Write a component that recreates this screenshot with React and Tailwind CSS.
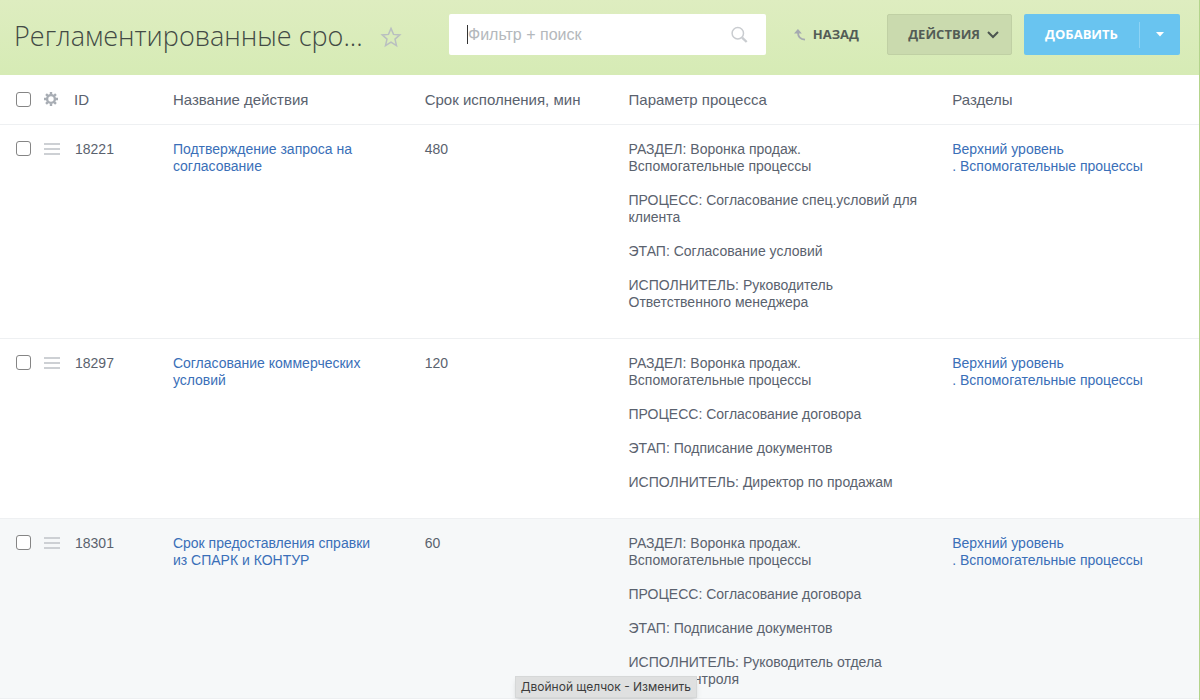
import { useState } from 'react';

const rows = [
  {
    id: 18221,
    name: 'Подтверждение запроса на согласование',
    term: 480,
    params: [
      'РАЗДЕЛ: Воронка продаж. Вспомогательные процессы',
      'ПРОЦЕСС: Согласование спец.условий для клиента',
      'ЭТАП: Согласование условий',
      'ИСПОЛНИТЕЛЬ: Руководитель Ответственного менеджера',
    ],
  },
  {
    id: 18297,
    name: 'Согласование коммерческих условий',
    term: 120,
    params: [
      'РАЗДЕЛ: Воронка продаж. Вспомогательные процессы',
      'ПРОЦЕСС: Согласование договора',
      'ЭТАП: Подписание документов',
      'ИСПОЛНИТЕЛЬ: Директор по продажам',
    ],
  },
  {
    id: 18301,
    name: 'Срок предоставления справки из СПАРК и КОНТУР',
    term: 60,
    hint: 'Двойной щелчок - Изменить',
    params: [
      'РАЗДЕЛ: Воронка продаж. Вспомогательные процессы',
      'ПРОЦЕСС: Согласование договора',
      'ЭТАП: Подписание документов',
      'ИСПОЛНИТЕЛЬ: Руководитель отдела учета и контроля',
    ],
  },
];

const StarIcon = () => (
  <svg width="22" height="22" viewBox="0 0 22 22" fill="none" stroke="#b9bfc0" strokeWidth="1.5" strokeLinejoin="miter">
    <path d="M11 2.4l2.5 6 6.3.5-4.8 4.2 1.5 6.5L11 16.1l-5.5 3.5L7 13.1 2.2 8.9l6.3-.5z" />
  </svg>
);

const SearchIcon = () => (
  <svg width="18" height="18" viewBox="0 0 18 18" fill="none" stroke="#c9ccd0">
    <circle cx="7.8" cy="7.3" r="5.7" strokeWidth="1.5" />
    <path d="M12.1 11.6l4.6 4.4" strokeWidth="2.4" />
  </svg>
);

const BackIcon = () => (
  <svg width="12" height="12" viewBox="0 0 12 12" fill="none">
    <path d="M4 3.5C4 8 6 10.2 11 10.6" stroke="#a5aab0" strokeWidth="1.8" />
    <path d="M0 4.6L3.9 0l4 4.6z" fill="#a5aab0" />
  </svg>
);

const GearIcon = () => (
  <svg width="14" height="14" viewBox="0 0 14 14" fill="none" stroke="#a8adb4">
    <circle cx="7" cy="7" r="3.9" strokeWidth="2.4" />
    <path
      d="M7 0v2.6M7 11.4V14M0 7h2.6M11.4 7H14M2.05 2.05l1.8 1.8M10.15 10.15l1.8 1.8M2.05 11.95l1.8-1.8M10.15 3.85l1.8-1.8"
      strokeWidth="2.4"
    />
  </svg>
);

const MenuIcon = () => (
  <svg width="16" height="12" viewBox="0 0 16 12" fill="#cdd0d4">
    <path d="M0 0h16v2H0zM0 5h16v2H0zM0 10h16v2H0z" />
  </svg>
);

const Checkbox = ({ label, checked, onChange }) => (
  <input
    type="checkbox"
    aria-label={label}
    checked={checked}
    onChange={onChange}
    className="block size-[15px] appearance-none rounded-[3px] border border-[#858585] bg-white checked:bg-[#2067b0]"
  />
);

const Toolbar = () => (
  <header className="flex h-[75px] items-center bg-linear-to-b from-[#deedc0] to-[#d6ebb5] pr-[19px] pl-[14px] font-['Open_Sans',sans-serif]">
    <div className="flex w-[435px] shrink-0 items-center gap-[17px] pb-1">
      <h1 className="text-[27px] leading-10 font-light whitespace-nowrap text-[#424a45]">Регламентированные сро...</h1>
      <button type="button" aria-label="В избранное" className="mt-0.5">
        <StarIcon />
      </button>
    </div>
    <div className="mb-[6px] flex h-[41px] min-w-0 flex-1 items-center rounded-xs bg-white px-[18px]">
      <span className="h-[19px] w-px shrink-0 bg-[#333]" />
      <input
        type="text"
        aria-label="Фильтр"
        placeholder="Фильтр + поиск"
        className="min-w-0 flex-1 font-['Liberation_Sans',Arial,sans-serif] text-base text-[#333] outline-none placeholder:text-[#b4b8bc]"
      />
      <button type="button" aria-label="Поиск">
        <SearchIcon />
      </button>
    </div>
    <div className="mb-[6px] ml-7 flex h-[41px] shrink-0 items-stretch text-[13px] font-bold text-[#535c56]">
      <a href="#back" className="flex items-center gap-[7px]">
        <BackIcon />
        НАЗАД
      </a>
      <button
        type="button"
        className="ml-7 flex w-[125px] items-center justify-end gap-[7px] rounded-xs border border-[#c0d0a4] bg-[#cadaae] pr-3"
      >
        ДЕЙСТВИЯ
        <svg width="12" height="8" viewBox="0 0 12 8" fill="none" stroke="#4c5550" strokeWidth="2">
          <path d="M1 1l5 5 5-5" />
        </svg>
      </button>
      <div className="ml-3 flex items-center rounded-xs bg-[#69c4f0] text-white">
        <button type="button" className="h-full w-[115px]">
          ДОБАВИТЬ
        </button>
        <span className="h-[26px] w-px bg-[#8dd3f5]" />
        <button type="button" aria-label="Ещё" className="flex h-full w-10 items-center justify-center">
          <svg width="8" height="5" viewBox="0 0 8 5" fill="currentColor">
            <path d="M0 0h8L4 4.6z" />
          </svg>
        </button>
      </div>
    </div>
  </header>
);

const App = () => {
  const [selected, setSelected] = useState([]);

  const toggle = (id) => {
    setSelected((prev) => (prev.includes(id) ? prev.filter((item) => item !== id) : [...prev, id]));
  };

  const toggleAll = () => {
    setSelected((prev) => (prev.length === rows.length ? [] : rows.map((row) => row.id)));
  };

  return (
    <div className="min-h-screen border-r border-[#b4d58c] bg-white font-['Liberation_Sans',Arial,sans-serif] text-sm leading-[17px] text-[#5a626e]">
      <Toolbar />
      <main>
        <table className="w-full table-fixed border-collapse text-left">
          <colgroup>
            <col className="w-11" />
            <col className="w-[30px]" />
            <col className="w-[8%]" />
            <col className="w-[21%]" />
            <col className="w-[17%]" />
            <col className="w-[27%]" />
            <col />
          </colgroup>
          <thead>
            <tr className="h-[49px] border-b border-[#eef0f2] text-[15px]">
              <th className="pl-4">
                <Checkbox label="Выбрать все" checked={selected.length === rows.length} onChange={toggleAll} />
              </th>
              <th>
                <button type="button" aria-label="Настройки" className="block">
                  <GearIcon />
                </button>
              </th>
              <th className="font-normal">ID</th>
              <th className="pl-[3px] font-normal">Название действия</th>
              <th className="pl-[3px] font-normal whitespace-nowrap">Срок исполнения, мин</th>
              <th className="pl-[3px] font-normal">Параметр процесса</th>
              <th className="pl-[3px] font-normal">Разделы</th>
            </tr>
          </thead>
          <tbody>
            {rows.map((row) => (
              <tr
                key={row.id}
                className={`border-b border-[#eef0f2] align-top ${row.hint ? 'bg-[#f6f8f9]' : ''}`}
              >
                <td className="pt-4 pl-4">
                  <Checkbox label={`Выбрать ${row.id}`} checked={selected.includes(row.id)} onChange={() => toggle(row.id)} />
                </td>
                <td className="pt-[18px]">
                  <button type="button" aria-label="Меню строки" className="block">
                    <MenuIcon />
                  </button>
                </td>
                <td className="pt-4 pl-px">{row.id}</td>
                <td className="pt-4 pr-10 pl-[3px]">
                  <a href={`#${row.id}`} className="text-[#3a6fb8]">
                    {row.name}
                  </a>
                </td>
                <td className="relative pt-4 pl-[3px]">
                  {row.term}
                  {row.hint && (
                    <div
                      role="tooltip"
                      className="absolute bottom-0 left-[93px] z-10 border border-[#d6d8d8] bg-[#dfe0e0] px-[5px] py-[2px] font-[Inter,sans-serif] text-xs leading-4 whitespace-nowrap text-[#3c3c3c] shadow-md"
                    >
                      {row.hint}
                    </div>
                  )}
                </td>
                <td className={`pt-4 pl-[3px] ${row.hint ? 'pb-[10px]' : 'pb-[27px]'}`}>
                  <div className="flex max-w-[291px] flex-col gap-[17px]">
                    {row.params.map((param) => (
                      <p key={param}>{param}</p>
                    ))}
                  </div>
                </td>
                <td className="pt-4 pl-[3px] text-[#3a6fb8]">
                  <a href="#top" className="block">
                    Верхний уровень
                  </a>
                  <a href="#processes" className="block">
                    . Вспомогательные процессы
                  </a>
                </td>
              </tr>
            ))}
          </tbody>
        </table>
      </main>
    </div>
  );
};

export default App;
